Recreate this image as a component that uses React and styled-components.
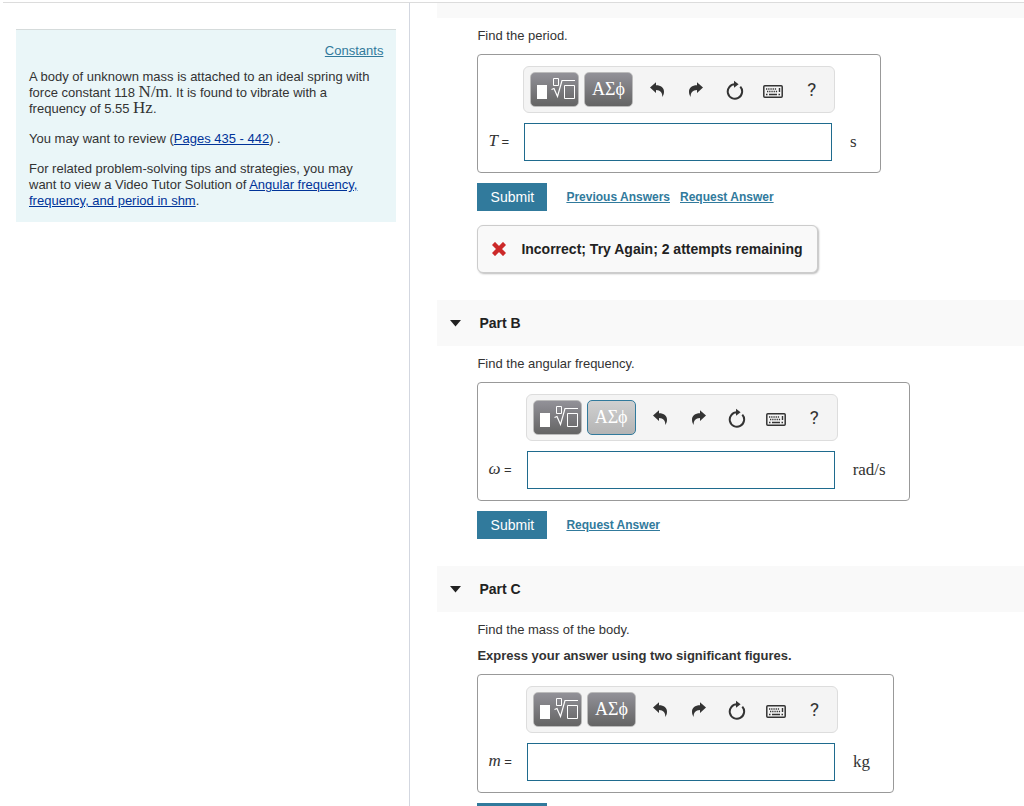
import { useState } from 'react';
import styled, { createGlobalStyle } from 'styled-components';

const GlobalStyle = createGlobalStyle`
   * {
      box-sizing: border-box;
   }

   body {
      margin: 0;
      background-color: #fff;
      color: #333;
      font-family: 'Liberation Sans', Arial, sans-serif;
      font-size: 13px;
      line-height: 16px;
   }
`;

function UndoIcon({ flip }) {
   return (
      <svg width="14" height="15" viewBox="0 0 14 15" fill="#333" aria-hidden="true">
         <path
            transform={flip ? 'matrix(-1 0 0 1 14 0)' : undefined}
            d="M0 5.6 6 .2v3c5 0 8 2.400 8 6.600 0 2-.6 3.800-1.700 5.200C12.600 10.800 10.500 8.200 6 8v3z"
         />
      </svg>
   );
}

function ResetIcon() {
   return (
      <svg width="18" height="20" viewBox="0 0 18 20" fill="none" aria-hidden="true">
         <path d="M14.300 6.700A7.200 7.200 0 1 1 9 4.300" stroke="#333" strokeWidth="2" />
         <path d="M8 .8 12.600 4.200 8 7.800z" fill="#333" />
      </svg>
   );
}

function KeyboardIcon() {
   return (
      <svg width="20" height="17" viewBox="0 -4 20 17" fill="none" stroke="#333" aria-hidden="true">
         <rect x=".8" y=".8" width="18.400" height="11.400" rx="1" strokeWidth="1.500" />
         <path d="M3 4h11M4 6.500h11" strokeWidth="1.400" strokeDasharray="1.300 .9" />
         <path d="M3 9.500h1.500M6 9.500h8M15.500 9.500H17M16.500 3v4" strokeWidth="1.400" />
      </svg>
   );
}

function TemplateIcon() {
   return (
      <svg width="47" height="33" viewBox="0 0 47 33" fill="none" stroke="#fff" aria-hidden="true">
         <path d="M6 12h10v14H6z" fill="#fff" stroke="none" />
         <path d="M22.500 5.500h5v7h-5z" />
         <path d="M20.500 16.500l2.500-1 3.500 8L31 7.500h13" strokeWidth="1.200" />
         <path d="M33.500 12.500h10v13h-10z" />
      </svg>
   );
}

function Equation({ id, symbol, unit, greekActive }) {
   const [value, setValue] = useState('');

   return (
      <AnswerBox>
         <Toolbar>
            <PaletteButton type="button" aria-label="Templates">
               <TemplateIcon />
            </PaletteButton>
            <PaletteButton type="button" $active={greekActive}>
               ΑΣϕ
            </PaletteButton>
            <Tools>
               <ToolButton type="button" aria-label="Undo">
                  <UndoIcon />
               </ToolButton>
               <ToolButton type="button" aria-label="Redo">
                  <UndoIcon flip />
               </ToolButton>
               <ToolButton type="button" aria-label="Reset">
                  <ResetIcon />
               </ToolButton>
               <ToolButton type="button" aria-label="Keyboard shortcuts">
                  <KeyboardIcon />
               </ToolButton>
               <ToolButton type="button">?</ToolButton>
            </Tools>
         </Toolbar>
         <Label htmlFor={id}>
            <Variable>{symbol}</Variable> =
         </Label>
         <AnswerInput
            id={id}
            type="text"
            value={value}
            onChange={(e) => setValue(e.target.value)}
         />
         <Unit>{unit}</Unit>
      </AnswerBox>
   );
}

function PartHeader({ title }) {
   return (
      <Header>
         <Toggle type="button">
            <svg width="11" height="7" viewBox="0 0 11 7" fill="#222" aria-hidden="true">
               <path d="M0 0h11L5.500 6.500z" />
            </svg>
            {title}
         </Toggle>
      </Header>
   );
}

function Actions({ links }) {
   return (
      <ActionRow>
         <Submit type="button">Submit</Submit>
         {links.map((link) => (
            <ActionLink key={link} href="#">
               {link}
            </ActionLink>
         ))}
      </ActionRow>
   );
}

function App() {
   return (
      <Page>
         <GlobalStyle />
         <Sidebar>
            <Problem>
               <Constants href="#">Constants</Constants>
               <p>
                  A body of unknown mass is attached to an ideal spring with
                  force constant 118 <MathText>N/m</MathText>. It is found to
                  vibrate with a frequency of 5.55 <MathText>Hz</MathText>.
               </p>
               <p>
                  You may want to review (<BookLink href="#">Pages 435 - 442</BookLink>) .
               </p>
               <p>
                  For related problem-solving tips and strategies, you may want
                  to view a Video Tutor Solution of{' '}
                  <BookLink href="#">
                     Angular frequency, frequency, and period in shm
                  </BookLink>
                  .
               </p>
            </Problem>
         </Sidebar>
         <Main>
            <HeaderEdge />
            <Part>
               <p>Find the period.</p>
               <Equation id="period" symbol="T" unit="s" />
               <Actions links={['Previous Answers', 'Request Answer']} />
               <Feedback>
                  <svg width="14" height="14" viewBox="0 0 14 14" aria-hidden="true">
                     <path d="M3 3l8 8M11 3l-8 8" stroke="#cc2929" strokeWidth="4.400" strokeLinecap="square" />
                  </svg>
                  Incorrect; Try Again; 2 attempts remaining
               </Feedback>
            </Part>
            <PartHeader title="Part B" />
            <Part>
               <p>Find the angular frequency.</p>
               <Equation id="angular" symbol="ω" unit="rad/s" greekActive />
               <Actions links={['Request Answer']} />
            </Part>
            <PartHeader title="Part C" />
            <Part>
               <p>Find the mass of the body.</p>
               <p>
                  <strong>Express your answer using two significant figures.</strong>
               </p>
               <Equation id="mass" symbol="m" unit="kg" />
               <Actions links={['Request Answer']} />
            </Part>
         </Main>
      </Page>
   );
}

export default App;

const Page = styled.div`
   display: flex;
   height: 100vh;
   padding: 2px 0 0 3px;
   overflow: hidden;
`;

const Sidebar = styled.aside`
   width: calc(40% - 1px);
   flex-shrink: 0;
   padding: 26px 13px 0 13px;
   border-top: 1px solid #dcdcdc;
   border-right: 1px solid #d3d7e0;
   overflow-y: auto;
   scrollbar-width: none;
`;

const Problem = styled.section`
   display: flex;
   flex-direction: column;
   gap: 14px;
   padding: 13px;
   border-top: 1px solid #d5dbdb;
   background-color: #eaf6f8;

   p {
      margin: 0;
   }
`;

const Constants = styled.a`
   align-self: flex-end;
   margin-bottom: -4px;
   color: #317a9c;
`;

const BookLink = styled.a`
   color: #003399;
`;

const MathText = styled.span`
   font-family: 'Liberation Serif', serif;
   font-size: 17px;
   line-height: 1px;
`;

const Main = styled.main`
   flex: 1;
   min-width: 0;
   padding-left: 27px;
   border-top: 1px solid #dcdcdc;
   overflow-y: auto;
   scrollbar-width: none;
`;

const HeaderEdge = styled.div`
   height: 15px;
   background-color: #f9f9f9;
`;

const Header = styled.h2`
   display: flex;
   height: 46px;
   margin: 0;
   background-color: #f9f9f9;
`;

const Toggle = styled.button`
   display: flex;
   align-items: center;
   gap: 18px;
   padding: 0 13px;
   border: 0;
   background: none;
   color: #222;
   font: bold 14px 'Liberation Sans', Arial, sans-serif;
`;

const Part = styled.section`
   padding: 10px 40px 27px;

   p {
      margin: 0 0 10px;
   }
`;

const AnswerBox = styled.div`
   display: grid;
   grid-template-columns: auto 312px auto;
   grid-template-rows: 47px 38px;
   row-gap: 10px;
   align-items: center;
   width: fit-content;
   padding: 11px 23px 11px 10px;
   border: 1px solid #999;
   border-radius: 4px;
`;

const Toolbar = styled.div`
   grid-column: 2;
   display: flex;
   align-items: center;
   gap: 5px;
   height: 47px;
   padding: 0 3px 0 6px;
   border: 1px solid #ddd;
   border-radius: 6px;
   background-color: #f4f4f4;
`;

const PaletteButton = styled.button`
   display: flex;
   align-items: center;
   justify-content: center;
   width: 49px;
   height: 35px;
   padding: 0;
   border: 1px solid ${({ $active }) => ($active ? '#317a9c' : '#bbb')};
   border-radius: 5px;
   background: ${({ $active }) =>
      $active
         ? 'linear-gradient(#d0d0d0, #b4b4b4)'
         : 'linear-gradient(#929198, #646464)'};
   color: #fff;
   font-family: 'Liberation Serif', serif;
   font-size: 18px;
`;

const Tools = styled.div`
   display: flex;
   flex: 1;
`;

const ToolButton = styled.button`
   display: flex;
   align-items: center;
   justify-content: center;
   flex: 1 1 0;
   height: 34px;
   padding: 0;
   border: 0;
   background: none;
   color: #333;
   font-family: Roboto, sans-serif;
   font-size: 19px;
`;

const Label = styled.label`
   grid-column: 1;
   padding-right: 14px;
`;

const Variable = styled.i`
   font-family: 'Liberation Serif', serif;
   font-size: 17px;
   line-height: 1px;
`;

const AnswerInput = styled.input`
   height: 38px;
   margin: 0 3px 0 1px;
   padding: 0 8px;
   border: 1px solid #1f6b8e;
   border-radius: 0;
   background-color: #fff;
   font-size: 16px;
   outline: none;
`;

const Unit = styled.span`
   padding-left: 15px;
   font-family: 'Liberation Serif', serif;
   font-size: 17px;
`;

const ActionRow = styled.div`
   display: flex;
   align-items: center;
   gap: 10px;
   margin-top: 10px;
`;

const Submit = styled.button`
   width: 70px;
   height: 28px;
   margin-right: 9px;
   padding: 0;
   border: 0;
   background-color: #317a9c;
   color: #fff;
   font: 14px 'Liberation Sans', Arial, sans-serif;
`;

const ActionLink = styled.a`
   color: #317a9c;
   font-size: 12px;
   font-weight: bold;
`;

const Feedback = styled.div`
   display: flex;
   align-items: center;
   gap: 15px;
   width: fit-content;
   height: 48px;
   margin-top: 14px;
   padding: 0 14px;
   border: 1px solid #ccc;
   border-radius: 6px;
   background-color: #f9f9f9;
   box-shadow: 1px 1px 2px #bbb;
   color: #222;
   font-size: 14px;
   font-weight: bold;
`;
